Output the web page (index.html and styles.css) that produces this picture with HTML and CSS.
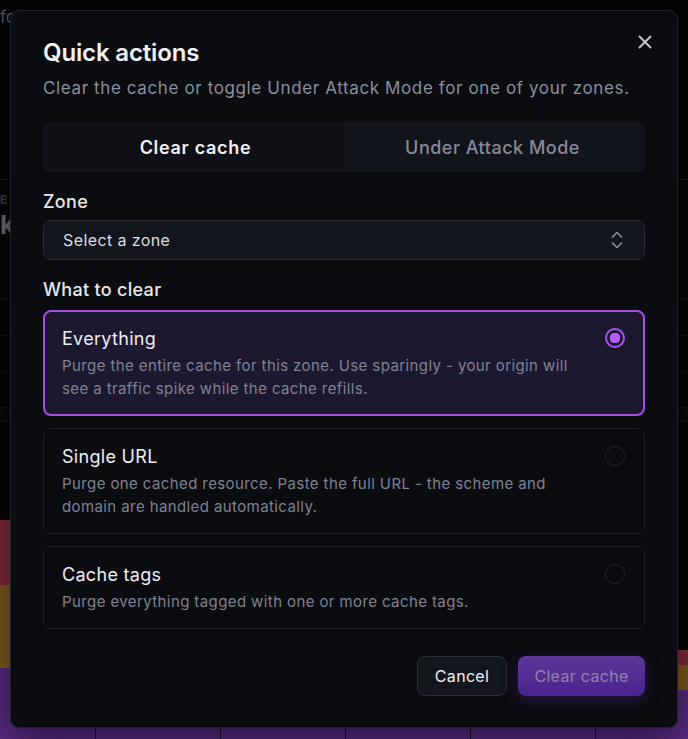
FILE: index.html
```html
<!DOCTYPE html>
<html lang="en">
<head>
<meta charset="utf-8">
<title>Quick actions</title>
<link rel="stylesheet" href="styles.css">
</head>
<body>
<div class="page">
  <div class="page-top">fo</div>
  <div class="page-section">
    <div class="page-kicker">E</div>
    <div class="page-big">k</div>
  </div>
  <div class="page-rows">
    <div class="page-row"></div>
    <div class="page-row dashed"></div>
    <div class="page-row dashed"></div>
    <div class="page-row band"></div>
  </div>
  <div class="chart">
    <div class="col" style="height:219px"><div class="seg red" style="height:65px"></div><div class="seg amber" style="height:83px"></div><div class="seg purple"></div></div>
    <div class="col" style="height:60px"><div class="seg purple"></div></div>
    <div class="col" style="height:60px"><div class="seg purple"></div></div>
    <div class="col" style="height:60px"><div class="seg purple"></div></div>
    <div class="col" style="height:60px"><div class="seg purple"></div></div>
    <div class="col last" style="height:89px"><div class="seg red" style="height:15px"></div><div class="seg amber" style="height:25px"></div><div class="seg purple"></div></div>
  </div>
</div>

<div class="modal" role="dialog" aria-labelledby="qa-title">
  <button class="close" aria-label="Close">
    <svg width="14" height="14" viewBox="0 0 14 14"><path d="M1.5 1.5 L12.5 12.5 M12.5 1.5 L1.5 12.5" stroke="#c9cad2" stroke-width="1.8" stroke-linecap="round" fill="none"/></svg>
  </button>
  <h2 id="qa-title" class="title">Quick actions</h2>
  <p class="subtitle">Clear the cache or toggle Under Attack Mode for one of your zones.</p>

  <div class="tabs">
    <div class="tab active">Clear cache</div>
    <div class="tab">Under Attack Mode</div>
  </div>

  <div class="label">Zone</div>
  <div class="select">
    <span>Select a zone</span>
    <svg width="14" height="20" viewBox="0 0 14 20"><path d="M2.5 7 L7 2.5 L11.5 7 M2.5 13 L7 17.5 L11.5 13" stroke="#8d90a0" stroke-width="1.6" stroke-linecap="round" stroke-linejoin="round" fill="none"/></svg>
  </div>

  <div class="label label-gap">What to clear</div>
  <div class="options">
    <div class="option selected">
      <div class="opt-text">
        <div class="opt-title">Everything</div>
        <div class="opt-desc">Purge the entire cache for this zone. Use sparingly - your origin will see a traffic spike while the cache refills.</div>
      </div>
      <span class="radio on"></span>
    </div>
    <div class="option">
      <div class="opt-text">
        <div class="opt-title">Single URL</div>
        <div class="opt-desc">Purge one cached resource. Paste the full URL - the scheme and domain are handled automatically.</div>
      </div>
      <span class="radio"></span>
    </div>
    <div class="option">
      <div class="opt-text">
        <div class="opt-title">Cache tags</div>
        <div class="opt-desc">Purge everything tagged with one or more cache tags.</div>
      </div>
      <span class="radio"></span>
    </div>
  </div>

  <div class="actions">
    <button class="btn btn-secondary">Cancel</button>
    <button class="btn btn-primary">Clear cache</button>
  </div>
</div>
</body>
</html>
```
FILE: styles.css
```css
* { box-sizing: border-box; }
html, body { margin: 0; padding: 0; }
body {
  width: 688px;
  height: 739px;
  overflow: hidden;
  background: #040405;
  font-family: Inter, "Noto Sans", "Liberation Sans", sans-serif;
  position: relative;
}

/* dimmed page behind the dialog */
.page {
  height: 739px;
  display: flex;
  flex-direction: column;
}
.page-top {
  height: 180px;
  padding-top: 7px;
  color: #55565c;
  font-size: 17px;
  border-bottom: 1px solid #1a1b20;
}
.page-section {
  height: 120px;
  padding-top: 12px;
  border-bottom: 1px solid #17181d;
  background: #060709;
}
.page-kicker { color: #3c3d44; font-size: 12px; font-weight: 700; }
.page-big { color: #6e7078; font-size: 26px; font-weight: 700; margin-top: 2px; }
.page-rows { display: flex; flex-direction: column; }
.page-row { height: 36px; border-bottom: 1px solid #131418; background: #050506; }
.page-row.dashed { border-bottom: 1px dashed #1a1b20; }
.page-row.band { height: 14px; background: #08090b; }
.chart {
  flex: 1;
  display: flex;
  align-items: flex-end;
}
.col {
  display: flex;
  flex-direction: column;
  width: 125px;
  border-right: 1px solid #1b0f2a;
}
.col:first-child { width: 96px; }
.col.last { flex: 1; border-right: 0; }
.seg { flex: none; }
.seg.purple { flex: 1; background: #592c84; }
.seg.red { background: #852b3b; }
.seg.amber { background: #835d20; }

/* dialog */
.modal {
  position: absolute;
  left: 10px;
  top: 10px;
  width: 668px;
  height: 718px;
  background: #0b0c10;
  border: 1px solid #23252d;
  border-radius: 9px;
  padding: 27px 32px 31px 32px;
  display: flex;
  flex-direction: column;
  box-shadow: 0 10px 40px rgba(0,0,0,0.6);
}
.close {
  position: absolute;
  right: 21px;
  top: 20px;
  width: 22px;
  height: 22px;
  padding: 0;
  border: 0;
  background: transparent;
  display: flex;
  align-items: center;
  justify-content: center;
}
.title {
  margin: 0;
  font-size: 24px;
  line-height: 30px;
  font-weight: 600;
  color: #f1f1f4;
  letter-spacing: -0.15px;
}
.subtitle {
  margin: 8px 0 0;
  font-size: 17px;
  line-height: 24px;
  color: #8b8e9e;
  letter-spacing: 0.62px;
}
.tabs {
  margin-top: 22px;
  height: 50px;
  padding: 4px;
  background: #12141b;
  border-radius: 7px;
  display: flex;
}
.tab {
  flex: 1;
  display: flex;
  align-items: center;
  justify-content: center;
  font-size: 18px;
  font-weight: 500;
  color: #868a9b;
  letter-spacing: 0.5px;
  border-radius: 5px;
}
.tab.active {
  background: #0e1016;
  color: #f2f2f5;
  font-weight: 600;
  letter-spacing: 0.7px;
}
.label {
  margin-top: 18px;
  font-size: 18px;
  line-height: 24px;
  font-weight: 500;
  color: #e8e8ec;
  letter-spacing: 0.3px;
}
.select {
  margin-top: 6px;
  height: 40px;
  background: #13151d;
  border: 1px solid #2b2e39;
  border-radius: 8px;
  padding: 0 20px 0 19px;
  display: flex;
  align-items: center;
  justify-content: space-between;
  font-size: 16px;
  color: #dcdde2;
  letter-spacing: 0.4px;
}
.options {
  margin-top: 8px;
  display: flex;
  flex-direction: column;
  gap: 12px;
}
.option {
  border: 1px solid #1e2028;
  border-radius: 8px;
  padding: 16px 19px 15px 18px;
  display: flex;
  align-items: flex-start;
  gap: 16px;
  background: #0b0c10;
}
.option.selected {
  border: 2px solid #a34fe6;
  background: #1c1830;
  padding: 15px 18px 14px 17px;
}
.opt-text { flex: 1; }
.opt-title {
  font-size: 18px;
  line-height: 24px;
  color: #eeeef2;
  letter-spacing: 0.3px;
}
.opt-desc {
  margin-top: 3px;
  font-size: 15px;
  line-height: 23px;
  color: #7f8292;
  letter-spacing: 0.4px;
}
.radio {
  flex: none;
  width: 20px;
  height: 20px;
  margin-top: 1px;
  border-radius: 50%;
  border: 1.5px solid #23252d;
}
.radio.on {
  border: 2px solid #a855f7;
  background: radial-gradient(circle, #b55cf8 0 5px, transparent 5.5px);
}
.actions {
  margin-top: auto;
  display: flex;
  justify-content: flex-end;
  gap: 11px;
}
.btn {
  height: 40px;
  border-radius: 8px;
  font-family: inherit;
  font-size: 16px;
  padding: 0 12px;
  letter-spacing: 0.3px;
  white-space: nowrap;
}
.btn-secondary {
  background: #14161e;
  border: 1px solid #2a2d37;
  color: #eeeef2;
  width: 90px;
}
.btn-primary {
  width: 127px;
  border: 0;
  background: linear-gradient(180deg, #5d3896 0%, #4a2390 100%);
  color: #8f86a8;
  box-shadow: 0 4px 16px rgba(88, 40, 160, 0.35);
}
```
